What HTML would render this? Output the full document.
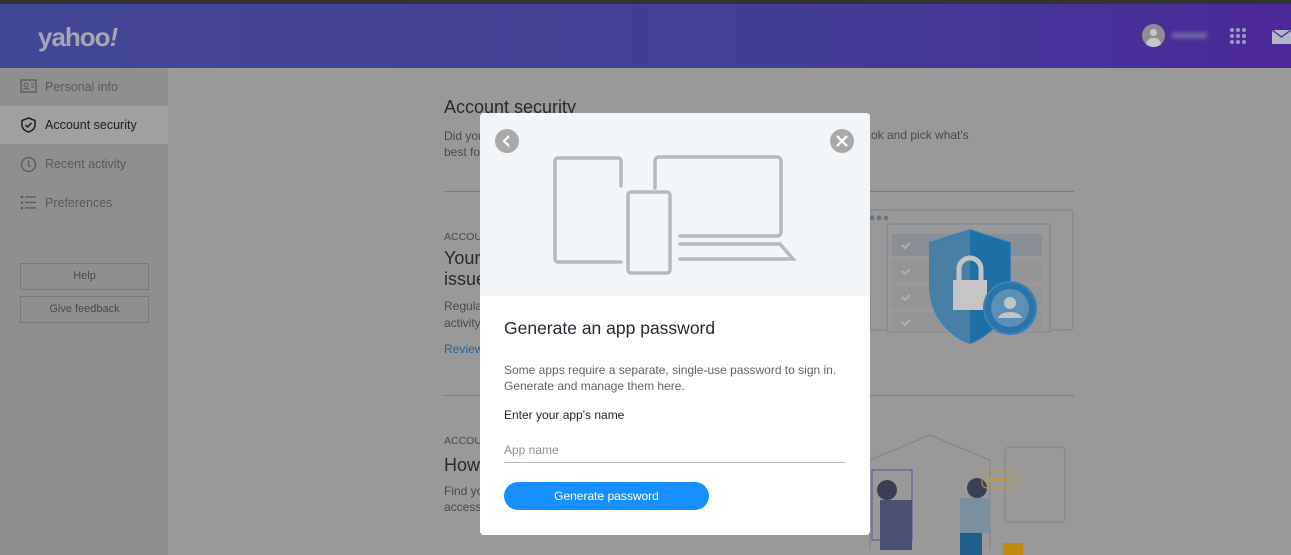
<!DOCTYPE html>
<html><head><meta charset="utf-8"><style>
*{margin:0;padding:0;box-sizing:border-box}
body{width:1291px;height:555px;overflow:hidden;background:#999;font-family:"Liberation Sans",Arial,sans-serif;position:relative}
.top{position:absolute;left:0;top:0;width:1291px;height:4px;background:#333}
.hdr{position:absolute;left:0;top:4px;width:1291px;height:64px;background:linear-gradient(90deg,#414894 0%,#433f96 60%,#4b2998 100%)}
.logo{position:absolute;left:38px;top:18px;color:#a5a5b5;font-weight:bold;font-size:26px;letter-spacing:-1px;font-style:normal}
.side{position:absolute;left:0;top:68px;width:168px;height:487px;background:#8f8f8f}
.item{position:absolute;left:0;width:168px;height:38px;font-size:12.5px;color:#5a5a5a;padding-left:45px;line-height:38px}
.item.act{background:#a0a0a0;color:#1e1e1e}
.item svg{position:absolute;left:20px;top:11px}
.btn{position:absolute;left:20px;width:129px;height:27px;border:1px solid #7a7a7a;font-size:11px;color:#4a4a4a;text-align:center;line-height:25px}
.m{position:absolute;color:#2a2a2a}
.g{color:#4a4a4a}
.hr{position:absolute;left:444px;width:630px;height:1px;background:#7e7e7e}
.modal{position:absolute;left:480px;top:113px;width:390px;height:422px;background:#fff;border-radius:4px;overflow:hidden}
.mtop{position:absolute;left:0;top:0;width:390px;height:183px;background:#f3f6f9}
.circ{position:absolute;width:24px;height:24px;border-radius:50%;background:#a9a9a9}
</style></head><body>
<div class="top"></div>
<div class="hdr">
<div class="logo">yahoo<i>!</i></div>
<div style="position:absolute;left:1142px;top:20px;width:23px;height:23px;border-radius:50%;background:#8e8e92;overflow:hidden"><div style="position:absolute;left:8px;top:5px;width:7px;height:7px;border-radius:50%;background:#c8c8c8"></div><div style="position:absolute;left:4px;top:14px;width:15px;height:10px;border-radius:7px 7px 0 0;background:#c8c8c8"></div></div>
<div style="position:absolute;left:1172px;top:29px;width:35px;height:5px;background:#7a72b0;filter:blur(2px)"></div>
<svg style="position:absolute;left:1229px;top:23px" width="20" height="20"><g fill="#9a9ac4"><circle cx="3" cy="3" r="2"/><circle cx="9" cy="3" r="2"/><circle cx="15" cy="3" r="2"/><circle cx="3" cy="9" r="2"/><circle cx="9" cy="9" r="2"/><circle cx="15" cy="9" r="2"/><circle cx="3" cy="15" r="2"/><circle cx="15" cy="15" r="2"/><circle cx="9" cy="15" r="2"/></g></svg>
<svg style="position:absolute;left:1272px;top:26px" width="19" height="14"><rect width="19" height="14" fill="#b5b5c8"/><path d="M0 0L9.5 7L19 0" stroke="#444596" stroke-width="1.5" fill="none"/></svg>
</div>
<div class="side">
<div class="item" style="top:0"><svg width="17" height="14"><rect x="1" y="1" width="15" height="12" fill="none" stroke="#5a5a5a" stroke-width="1.3"/><circle cx="6" cy="6" r="2" fill="none" stroke="#5a5a5a"/><path d="M3 11c0-2 6-2 6 0M11 5h3M11 8h3" stroke="#5a5a5a" fill="none"/></svg>Personal info</div>
<div class="item act" style="top:38px"><svg width="17" height="16"><path d="M8.5 1L15 3.5V8c0 3.5-3 6-6.5 7C5 14 2 11.5 2 8V3.5z" fill="none" stroke="#1e1e1e" stroke-width="1.5"/><path d="M5.5 8l2 2 4-4" fill="none" stroke="#1e1e1e" stroke-width="1.5"/></svg>Account security</div>
<div class="item" style="top:77px"><svg width="17" height="17"><circle cx="8.5" cy="8.5" r="7" fill="none" stroke="#5a5a5a" stroke-width="1.3"/><path d="M8.5 4.5v4.5l2 2" stroke="#5a5a5a" fill="none" stroke-width="1.3"/></svg>Recent activity</div>
<div class="item" style="top:116px"><svg width="17" height="15"><g fill="#5a5a5a"><circle cx="2" cy="2" r="1.3"/><circle cx="2" cy="7.5" r="1.3"/><circle cx="2" cy="13" r="1.3"/><rect x="5" y="1.3" width="11" height="1.3"/><rect x="5" y="6.8" width="11" height="1.3"/><rect x="5" y="12.3" width="11" height="1.3"/></g></svg>Preferences</div>
<div class="btn" style="top:195px">Help</div>
<div class="btn" style="top:228px">Give feedback</div>
</div>
<div class="m" style="left:444px;top:97px;font-size:18px">Account security</div>
<div class="m g" style="left:444px;top:128px;font-size:12px;line-height:16px">Did you<br>best fo</div>
<div class="m g" style="left:871px;top:128px;font-size:12px">ok and pick what's</div>
<div class="hr" style="top:191px"></div>
<div class="m g" style="left:444px;top:231px;font-size:10.5px">ACCOU</div>
<div class="m" style="left:444px;top:248px;font-size:18px;line-height:21px">Your<br>issue</div>
<div class="m g" style="left:444px;top:298px;font-size:12px;line-height:17px">Regula<br>activity</div>
<div class="m" style="left:444px;top:342px;font-size:12px;color:#1d63a8">Review</div>
<div class="hr" style="top:395px"></div>
<div class="m g" style="left:444px;top:435px;font-size:10.5px">ACCOU</div>
<div class="m" style="left:444px;top:455px;font-size:18px">How</div>
<div class="m g" style="left:444px;top:483px;font-size:12px;line-height:16px">Find yo<br>access</div>
<svg style="position:absolute;left:860px;top:205px" width="220" height="350">
<rect x="10" y="5" width="203" height="120" rx="3" fill="none" stroke="#7b8590"/>
<g fill="#6b7683"><circle cx="12" cy="13" r="2.5"/><circle cx="19" cy="13" r="2.5"/><circle cx="26" cy="13" r="2.5"/></g>
<rect x="27" y="19" width="163" height="108" fill="#999" stroke="#7b8590"/>
<rect x="32" y="29" width="150" height="22" fill="#8a8f96"/>
<rect x="32" y="55" width="150" height="22" fill="#959595"/>
<rect x="32" y="81" width="150" height="22" fill="#959595"/>
<rect x="32" y="107" width="150" height="20" fill="#959595"/>
<g fill="none" stroke="#b0b0b0" stroke-width="2"><path d="M42 40l3 3 5-5M42 66l3 3 5-5M42 92l3 3 5-5M42 117l3 3 5-5"/></g>
<path d="M70 38L110 25L150 38L150 80C150 115 125 133 110 138C95 133 70 115 70 80Z" fill="#4a7fa5" stroke="#3b82b4" stroke-width="2"/>
<path d="M110 25L150 38V80C150 115 125 133 110 138Z" fill="#1d6fa5"/>
<rect x="93" y="75" width="34" height="30" fill="#c4c4c4"/>
<path d="M99 75V64a11 11 0 0 1 22 0v11" fill="none" stroke="#c4c4c4" stroke-width="5"/>
<circle cx="150" cy="103" r="26" fill="#2a75a8" stroke="#3b82b4" stroke-width="2"/><circle cx="150" cy="103" r="19" fill="#5a8fb8"/>
<circle cx="150" cy="98" r="6" fill="#c4c4c4"/><path d="M138 113c2-8 22-8 24 0" fill="#c4c4c4"/>
<path d="M10 345V255L70 230L130 255V345" fill="none" stroke="#7b8590"/>
<rect x="145" y="242" width="60" height="75" rx="4" fill="none" stroke="#7b8590"/>
<rect x="12" y="265" width="40" height="70" fill="none" stroke="#5a4fa0"/>
<rect x="20" y="295" width="32" height="50" fill="#4a5070"/>
<circle cx="27" cy="285" r="10" fill="#3a3f55"/>
<circle cx="117" cy="283" r="10" fill="#3a3f55"/>
<rect x="100" y="293" width="30" height="35" fill="#7a909e"/>
<rect x="100" y="328" width="22" height="22" fill="#1f5f8a"/>
<rect x="122" y="266" width="34" height="17" rx="5" fill="none" stroke="#c49a30"/>
<g fill="#c49a30"><circle cx="131" cy="275" r="2.5"/><circle cx="139" cy="275" r="2.5"/><circle cx="147" cy="275" r="2.5"/></g>
<rect x="143" y="338" width="20" height="17" fill="#c08a10"/>
</svg>
<div class="modal">
<div class="mtop">
<div class="circ" style="left:15px;top:16px"><svg width="24" height="24"><path d="M14 7l-5 5 5 5" fill="none" stroke="#fff" stroke-width="2.3"/></svg></div>
<div class="circ" style="left:350px;top:16px"><svg width="24" height="24"><path d="M7 7l10 10M17 7L7 17" fill="none" stroke="#fff" stroke-width="2.3"/></svg></div>
<svg style="position:absolute;left:70px;top:40px" width="250" height="130" fill="none" stroke="#b3bac2" stroke-width="3.5" stroke-linecap="round">
<path d="M71 33V8a3 3 0 0 0-3-3H8a3 3 0 0 0-3 3v98a3 3 0 0 0 3 3H71"/>
<path d="M105 35V8a4 4 0 0 1 4-4H227a4 4 0 0 1 4 4V79a4 4 0 0 1-4 4H130"/>
<path d="M130 91H230l13 15H130"/>
<rect x="78" y="39" width="42" height="81" rx="3"/>
</svg>
</div>
<div style="position:absolute;left:24px;top:205px;font-size:17.5px;color:#232a31">Generate an app password</div>
<div style="position:absolute;left:24px;top:249px;font-size:12px;line-height:16px;color:#5b636a">Some apps require a separate, single-use password to sign in.<br>Generate and manage them here.</div>
<div style="position:absolute;left:24px;top:295px;font-size:12px;color:#1d2228">Enter your app's name</div>
<div style="position:absolute;left:24px;top:330px;font-size:12px;color:#8a9096">App name</div>
<div style="position:absolute;left:24px;top:349px;width:342px;height:1px;background:#b9bdc2"></div>
<div style="position:absolute;left:24px;top:369px;width:205px;height:28px;border-radius:14px;background:#188fff;color:#fff;font-size:12px;text-align:center;line-height:28px">Generate password</div>
</div>
</body></html>
